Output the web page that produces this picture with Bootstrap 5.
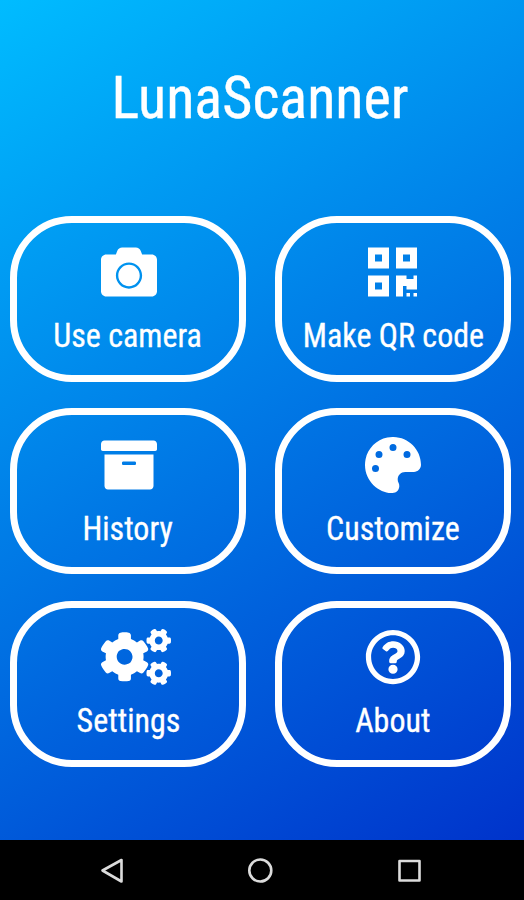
<!DOCTYPE html>
<html lang="en">
<head>
<meta charset="utf-8">
<meta name="viewport" content="width=device-width, initial-scale=1">
<title>LunaScanner</title>
<link rel="stylesheet" href="https://cdn.jsdelivr.net/npm/bootstrap@5.3.0/dist/css/bootstrap.min.css">
<style>
body{font-family:"Roboto Condensed",Roboto,sans-serif;color:#fff;background:#000}
.phone{width:524px;height:900px}
.screen{height:840px;background:linear-gradient(148deg,#00bcff,#0033cb)}
.app-title{font-size:60px;line-height:70px;padding-top:63px;padding-right:3px;margin-bottom:82.5px;-webkit-text-stroke:.4px #fff}
.tile-grid{display:grid;grid-template-columns:236px 236px;grid-auto-rows:166px;gap:26.5px 29px;padding-left:10px}
.tile{border:7px solid #fff;border-radius:62px;color:#fff;padding-top:21.5px;background:transparent}
.tile svg{height:56px;fill:#fff;display:block}
.icon-right{margin-left:2px}
.icon-left{margin-right:2px}
.icon-gears{margin-left:16px}
.tile-label{font-size:33px;line-height:40px;margin-top:16px;white-space:nowrap;-webkit-text-stroke:.3px #fff}
.fit{display:inline-block;transform:scaleX(.97)}
.sysbar{height:60px;padding-right:4px}
.sysbar svg{fill:none;stroke:#dcdcdc;stroke-width:2.6;stroke-linejoin:round}
</style>
</head>
<body>
<main class="phone overflow-hidden">
<div class="screen">
<h1 class="app-title text-center fw-normal mt-0"><span class="fit">LunaScanner</span></h1>
<nav class="tile-grid">
<button class="tile d-flex flex-column align-items-center" type="button">
<svg class="icon-right" viewBox="0 0 512 512"><path d="M512 144v288c0 26.500-21.500 48-48 48H48c-26.500 0-48-21.500-48-48V144c0-26.500 21.500-48 48-48h88l12.300-32.900c7-18.700 24.900-31.100 44.900-31.100h125.500c20 0 37.900 12.400 44.900 31.100L376 96h88c26.500 0 48 21.500 48 48zM376 288c0-66.200-53.800-120-120-120s-120 53.800-120 120 53.800 120 120 120 120-53.800 120-120zm-22 0c0 54-44 98-98 98s-98-44-98-98 44-98 98-98 98 44 98 98z"/></svg>
<span class="tile-label"><span class="fit">Use camera</span></span>
</button>
<button class="tile d-flex flex-column align-items-center" type="button">
<svg class="icon-left" viewBox="0 0 448 512"><path d="M0 224h192V32H0v192zM64 96h64v64H64V96zm192-64v192h192V32H256zm128 128h-64V96h64v64zM0 480h192V288H0v192zm64-128h64v64H64v-64zm352-64h32v128h-96v-32h-32v96h-64V288h96v32h64v-32zm0 160h32v32h-32v-32zm-64 0h32v32h-32v-32z"/></svg>
<span class="tile-label"><span class="fit">Make QR code</span></span>
</button>
<button class="tile d-flex flex-column align-items-center" type="button">
<svg class="icon-right" viewBox="0 0 512 512"><path d="M32 448c0 17.700 14.300 32 32 32h384c17.700 0 32-14.300 32-32V160H32v288zm160-212c0-6.600 5.400-12 12-12h104c6.600 0 12 5.400 12 12v8c0 6.600-5.400 12-12 12H204c-6.600 0-12-5.400-12-12v-8zM480 32H32C14.300 32 0 46.300 0 64v48c0 8.800 7.200 16 16 16h480c8.800 0 16-7.200 16-16V64c0-17.700-14.300-32-32-32z"/></svg>
<span class="tile-label"><span class="fit">History</span></span>
</button>
<button class="tile d-flex flex-column align-items-center" type="button">
<svg viewBox="0 0 512 512"><path d="M204.300 5C104.900 24.400 24.800 104.300 5.200 203.400c-37 187 131.700 326.400 258.800 306.700 41.200-6.400 61.400-54.600 42.500-91.700-23.100-45.400 9.900-98.400 60.900-98.400h79.700c35.800 0 64.800-29.600 64.900-65.300C511.500 97.100 368.100-26.900 204.300 5zM96 320a32 32 0 1 1 0-64 32 32 0 0 1 0 64zm32-128a32 32 0 1 1 0-64 32 32 0 0 1 0 64zm128-64a32 32 0 1 1 0-64 32 32 0 0 1 0 64zm128 64a32 32 0 1 1 0-64 32 32 0 0 1 0 64z"/></svg>
<span class="tile-label"><span class="fit">Customize</span></span>
</button>
<button class="tile d-flex flex-column align-items-center" type="button">
<svg class="icon-gears" viewBox="0 0 640 512"><defs><path id="gear" d="M512.1 191l-8.200 14.300c-3 5.300-9.400 7.500-15.100 5.400-11.800-4.400-22.600-10.700-32.100-18.600-4.600-3.800-5.800-10.500-2.800-15.700l8.200-14.300c-6.900-8-12.300-17.300-15.900-27.400h-16.500c-6 0-11.200-4.300-12.200-10.300-2-12-2.100-24.600 0-37.100 1-6 6.200-10.400 12.200-10.400h16.500c3.600-10.100 9-19.400 15.900-27.400l-8.200-14.300c-3-5.200-1.900-11.900 2.800-15.700 9.500-7.900 20.400-14.200 32.100-18.600 5.700-2.100 12.100.1 15.100 5.400l8.200 14.300c10.500-1.900 21.200-1.900 31.700 0L552 6.300c3-5.300 9.400-7.500 15.100-5.400 11.800 4.400 22.600 10.700 32.100 18.600 4.600 3.800 5.800 10.500 2.800 15.700l-8.200 14.300c6.900 8 12.300 17.300 15.900 27.400h16.500c6 0 11.200 4.300 12.200 10.300 2 12 2.100 24.600 0 37.100-1 6-6.200 10.400-12.200 10.400h-16.500c-3.600 10.100-9 19.400-15.900 27.400l8.200 14.300c3 5.200 1.900 11.900-2.800 15.700-9.500 7.900-20.400 14.200-32.100 18.600-5.700 2.100-12.100-.1-15.100-5.400l-8.200-14.300c-10.400 1.900-21.200 1.900-31.700 0zm-10.500-58.800c38.500 29.600 82.400-14.300 52.800-52.800-38.500-29.700-82.400 14.300-52.800 52.800z"/></defs><use href="#gear"/><use href="#gear" y="298.900"/><path d="M386.300 286.100l33.700 16.800c10.100 5.800 14.500 18.100 10.500 29.100-8.900 24.200-26.400 46.400-42.600 65.800-7.400 8.900-20.200 11.100-30.300 5.300l-29.100-16.800c-16 13.700-34.600 24.600-54.900 31.700v33.600c0 11.600-8.300 21.600-19.700 23.600-24.600 4.200-50.400 4.400-75.900 0-11.500-2-20-11.900-20-23.600V418c-20.300-7.200-38.900-18-54.900-31.700L74 403c-10 5.800-22.900 3.600-30.300-5.300-16.200-19.400-33.300-41.600-42.200-65.700-4-10.900.4-23.200 10.500-29.100l33.300-16.800c-3.900-20.900-3.900-42.400 0-63.400L12 205.800c-10.100-5.800-14.600-18.100-10.500-29 8.900-24.200 26-46.400 42.200-65.800 7.400-8.900 20.200-11.100 30.300-5.300l29.100 16.800c16-13.700 34.600-24.600 54.900-31.700V57.100c0-11.500 8.200-21.500 19.600-23.500 24.600-4.200 50.500-4.400 76-.1 11.500 2 20 11.900 20 23.600v33.600c20.300 7.200 38.900 18 54.900 31.700l29.100-16.800c10-5.800 22.900-3.600 30.300 5.300 16.200 19.400 33.200 41.600 42.100 65.800 4 10.900.1 23.200-10 29.100l-33.700 16.800c3.900 21 3.900 42.500 0 63.500zm-117.600 21.100c59.200-77-28.700-164.900-105.700-105.700-59.200 77 28.700 164.900 105.700 105.700z"/></svg>
<span class="tile-label"><span class="fit">Settings</span></span>
</button>
<button class="tile d-flex flex-column align-items-center" type="button">
<svg viewBox="0 0 512 512"><path d="M256 8C119 8 8 119 8 256s111 248 248 248 248-111 248-248S393 8 256 8zm0 448c-110.500 0-200-89.400-200-200 0-110.500 89.500-200 200-200s200 89.500 200 200c0 110.500-89.400 200-200 200zm107.200-255.200c0 67.100-72.400 68.100-72.400 92.900V300c0 6.600-5.400 12-12 12h-45.600c-6.600 0-12-5.400-12-12v-8.700c0-35.700 27.100-50 47.600-61.500 17.600-9.800 28.300-16.500 28.300-29.600 0-17.200-22-28.700-39.800-28.700-23.200 0-33.900 11-48.900 30-4.100 5.100-11.500 6.100-16.700 2.100l-27.800-21.100c-5.100-3.900-6.300-11.100-2.600-16.400C184.800 131.500 214.900 112 261.800 112c49.100 0 101.400 38.300 101.400 88.800zM298 368a42 42 0 1 1-84 0 42 42 0 0 1 84 0z"/></svg>
<span class="tile-label"><span class="fit">About</span></span>
</button>
</nav>
</div>
<footer class="sysbar bg-black d-flex align-items-center justify-content-center">
<svg width="420" height="60" viewBox="50 840 420 60"><path d="M102.500 870.500L121.500 860v21.500z"/><circle cx="260.300" cy="870.500" r="11"/><rect x="399.500" y="861" width="20" height="19.500"/></svg>
</footer>
</main>
<script src="https://cdn.jsdelivr.net/npm/bootstrap@5.3.0/dist/js/bootstrap.bundle.min.js"></script>
</body>
</html>
